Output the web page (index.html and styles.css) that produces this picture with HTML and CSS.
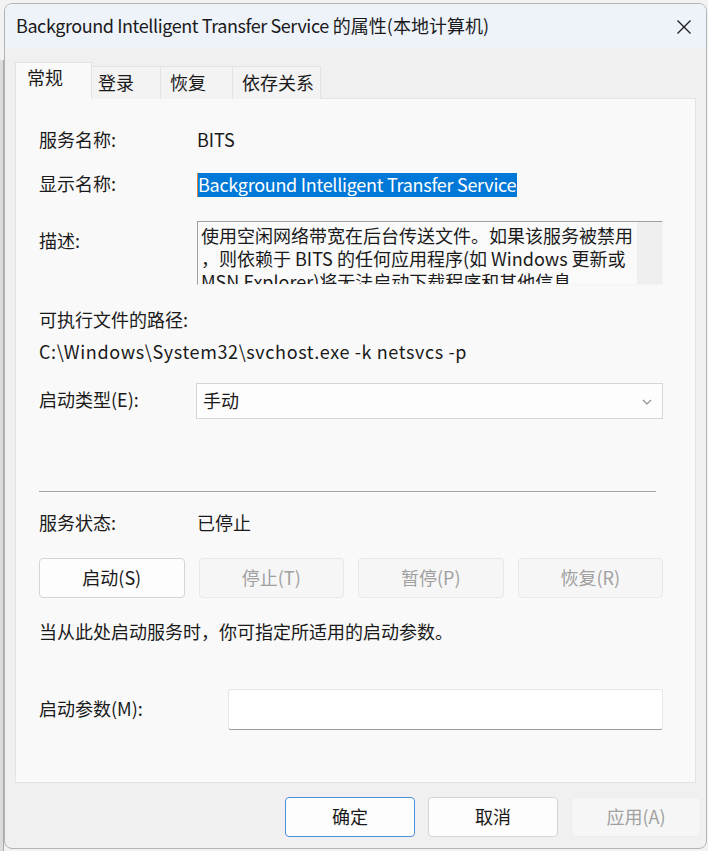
FILE: index.html
```html
<!DOCTYPE html>
<html lang="zh-CN">
<head>
<meta charset="utf-8">
<title>BITS 属性</title>
<link rel="stylesheet" href="styles.css">
</head>
<body>
<div class="desk-strip"></div>
<div class="window">
  <div class="titlebar">
    <span class="title"><span class="title-latin">Background Intelligent Transfer Service</span> 的属性(本地计算机)</span>
    <span class="close">
      <svg width="16" height="16" viewBox="0 0 16 16"><path d="M1.5 1.5 L14.5 14.5 M14.5 1.5 L1.5 14.5" stroke="#1a1a1a" stroke-width="1.3" fill="none"/></svg>
    </span>
  </div>
  <div class="body">
    <div class="tabs">
      <div class="tab active t1">常规</div>
      <div class="tab t2">登录</div>
      <div class="tab t3">恢复</div>
      <div class="tab t4">依存关系</div>
    </div>
    <div class="panel">
      <div class="row r-name">
        <span class="label">服务名称:</span>
        <span class="value">BITS</span>
      </div>
      <div class="row r-display">
        <span class="label">显示名称:</span>
        <span class="value"><span class="selected">Background Intelligent Transfer Service</span></span>
      </div>
      <div class="row r-desc">
        <span class="label desc-label">描述:</span>
        <div class="descbox">
          <div class="desc-text">
            <div>使用空闲网络带宽在后台传送文件。如果该服务被禁用</div>
            <div>，则依赖于 BITS 的任何应用程序(如 Windows 更新或</div>
            <div>MSN Explorer)将无法启动下载程序和其他信息</div>
          </div>
          <div class="scrolltrack"></div>
        </div>
      </div>
      <div class="line r-pathlabel">可执行文件的路径:</div>
      <div class="line r-path">C:\Windows\System32\svchost.exe -k netsvcs -p</div>
      <div class="row r-type">
        <span class="label">启动类型(E):</span>
        <div class="select">
          <span class="select-text">手动</span>
          <svg class="chev" width="10" height="6" viewBox="0 0 10 6"><path d="M1 1 L5 5 L9 1" stroke="#8a8a8a" stroke-width="1.1" fill="none"/></svg>
        </div>
      </div>
      <div class="separator"></div>
      <div class="row r-status">
        <span class="label">服务状态:</span>
        <span class="value">已停止</span>
      </div>
      <div class="btnrow">
        <div class="btn">启动(S)</div>
        <div class="btn disabled">停止(T)</div>
        <div class="btn disabled">暂停(P)</div>
        <div class="btn disabled">恢复(R)</div>
      </div>
      <div class="line r-hint">当从此处启动服务时，你可指定所适用的启动参数。</div>
      <div class="row r-params">
        <span class="label params-label">启动参数(M):</span>
        <div class="input"></div>
      </div>
    </div>
    <div class="footer">
      <div class="fbtn default">确定</div>
      <div class="fbtn">取消</div>
      <div class="fbtn disabled">应用(A)</div>
    </div>
  </div>
</div>
</body>
</html>
```
FILE: styles.css
```css
html, body {
  margin: 0;
  padding: 0;
}
body {
  width: 708px;
  height: 851px;
  background: #f2f2f2;
  font-family: "Noto Sans CJK SC", "Noto Sans", sans-serif;
  font-size: 18px;
  color: #1a1a1a;
  overflow: hidden;
  position: relative;
}
.desk-strip {
  position: absolute;
  left: 0;
  top: 60px;
  width: 3px;
  height: 791px;
  background: #dcdcdc;
  border-right: 1px solid #a8a8a8;
}
.window {
  position: absolute;
  left: 4px;
  top: 3px;
  width: 701px;
  height: 844px;
  border: 1px solid #b4b4b4;
  border-radius: 8px;
  background: #f0f0f0;
  overflow: hidden;
  display: flex;
  flex-direction: column;
}
.titlebar {
  height: 45px;
  background: #eef3fa;
  display: flex;
  align-items: center;
  justify-content: space-between;
  padding: 0 14px 0 11px;
}
.title {
  font-size: 18px;
  line-height: 20px;
  height: 24px;
}
.title-latin {
  letter-spacing: -0.42px;
}
.close {
  display: flex;
  align-items: center;
  width: 16px;
  height: 16px;
}
.body {
  flex: 1;
  display: flex;
  flex-direction: column;
  padding: 13px 10px 0 10px;
}
.tabs {
  display: flex;
  align-items: flex-end;
  height: 36px;
  position: relative;
  z-index: 1;
}
.tab {
  box-sizing: border-box;
  height: 33px;
  background: #f3f3f3;
  border: 1px solid #e3e3e3;
  border-bottom: none;
  line-height: 30px;
  margin-bottom: -1px;
}
.tab.active {
  height: 37px;
  background: #f9f9f9;
  line-height: 28px;
  border-color: #e3e3e3;
}
.t1 { width: 77px; padding-left: 11px; }
.t2 { width: 69px; padding-left: 6px; border-left: none; }
.t3 { width: 72px; padding-left: 9px; border-left: none; }
.t4 { width: 88px; padding-left: 9px; border-left: none; }
.panel {
  box-sizing: border-box;
  height: 685px;
  background: #f9f9f9;
  border: 1px solid #e3e3e3;
  padding: 30px 32px 0 23px;
  display: flex;
  flex-direction: column;
}
.row {
  display: flex;
  align-items: center;
}
.label {
  width: 158px;
  flex: none;
  height: 24px;
  line-height: 20px;
}
.value {
  height: 24px;
  line-height: 20px;
}
.r-name { height: 24px; }
.r-display { height: 24px; margin-top: 20px; }
.selected {
  display: inline-block;
  background: #0078d7;
  color: #ffffff;
  height: 24px;
  line-height: 22px;
  border-left: 1px solid #e8843a;
  padding-right: 1px;
  letter-spacing: -0.28px;
}
.r-desc {
  margin-top: 24px;
  align-items: flex-start;
}
.desc-label {
  margin-top: 9px;
}
.descbox {
  box-sizing: border-box;
  width: 466px;
  height: 64px;
  border-top: 1px solid #a0a0a0;
  border-left: 1px solid #a0a0a0;
  border-right: 1px solid #f4f4f4;
  border-bottom: 1px solid #f4f4f4;
  background: #fafafa;
  display: flex;
  overflow: hidden;
}
.desc-text {
  flex: 1;
  padding: 2px 0 0 3px;
  line-height: 23px;
  white-space: nowrap;
  overflow: hidden;
}
.scrolltrack {
  width: 25px;
  background: #efefef;
}
.line {
  height: 24px;
  line-height: 20px;
}
.r-pathlabel { margin-top: 24px; }
.r-path { margin-top: 8px; letter-spacing: 0.62px; }
.r-type { margin-top: 18px; }
.select {
  box-sizing: border-box;
  width: 467px;
  height: 36px;
  margin-left: -1px;
  background: #fdfdfd;
  border: 1px solid #d6d6d6;
  display: flex;
  align-items: center;
  justify-content: space-between;
  padding: 0 10px 0 6px;
}
.select-text {
  padding-bottom: 3px;
}
.chev {
  margin-top: 1px;
}
.separator {
  margin-top: 72px;
  width: 617px;
  height: 1px;
  background: #a0a0a0;
  border-bottom: 1px solid #ffffff;
}
.r-status { margin-top: 19px; height: 24px; }
.btnrow {
  margin-top: 22px;
  display: grid;
  grid-template-columns: repeat(4, 1fr);
  column-gap: 14px;
  width: 624px;
}
.btn {
  box-sizing: border-box;
  height: 40px;
  border: 1px solid #d4d4d4;
  border-radius: 4px;
  background: #fdfdfd;
  display: flex;
  align-items: center;
  justify-content: center;
  padding-bottom: 3px;
}
.btn.disabled {
  background: #f6f6f6;
  border-color: #e8e8e8;
  color: #a0a0a0;
}
.r-hint { margin-top: 23px; }
.r-params {
  margin-top: 44px;
}
.params-label {
  width: 189px;
}
.input {
  box-sizing: border-box;
  width: 435px;
  height: 41px;
  background: #ffffff;
  border: 1px solid #e6e6e6;
  border-bottom: 1px solid #9a9a9a;
  border-radius: 3px;
}
.footer {
  display: flex;
  justify-content: flex-end;
  gap: 13px;
  margin-top: 14px;
  margin-right: -5px;
}
.fbtn {
  box-sizing: border-box;
  width: 130px;
  height: 40px;
  border: 1px solid #d4d4d4;
  border-radius: 4px;
  background: #fdfdfd;
  display: flex;
  align-items: center;
  justify-content: center;
  padding-bottom: 3px;
}
.fbtn.default {
  border: 1px solid #4a90dc;
}
.fbtn.disabled {
  background: #f6f6f6;
  border-color: #ececec;
  color: #a0a0a0;
}
```
